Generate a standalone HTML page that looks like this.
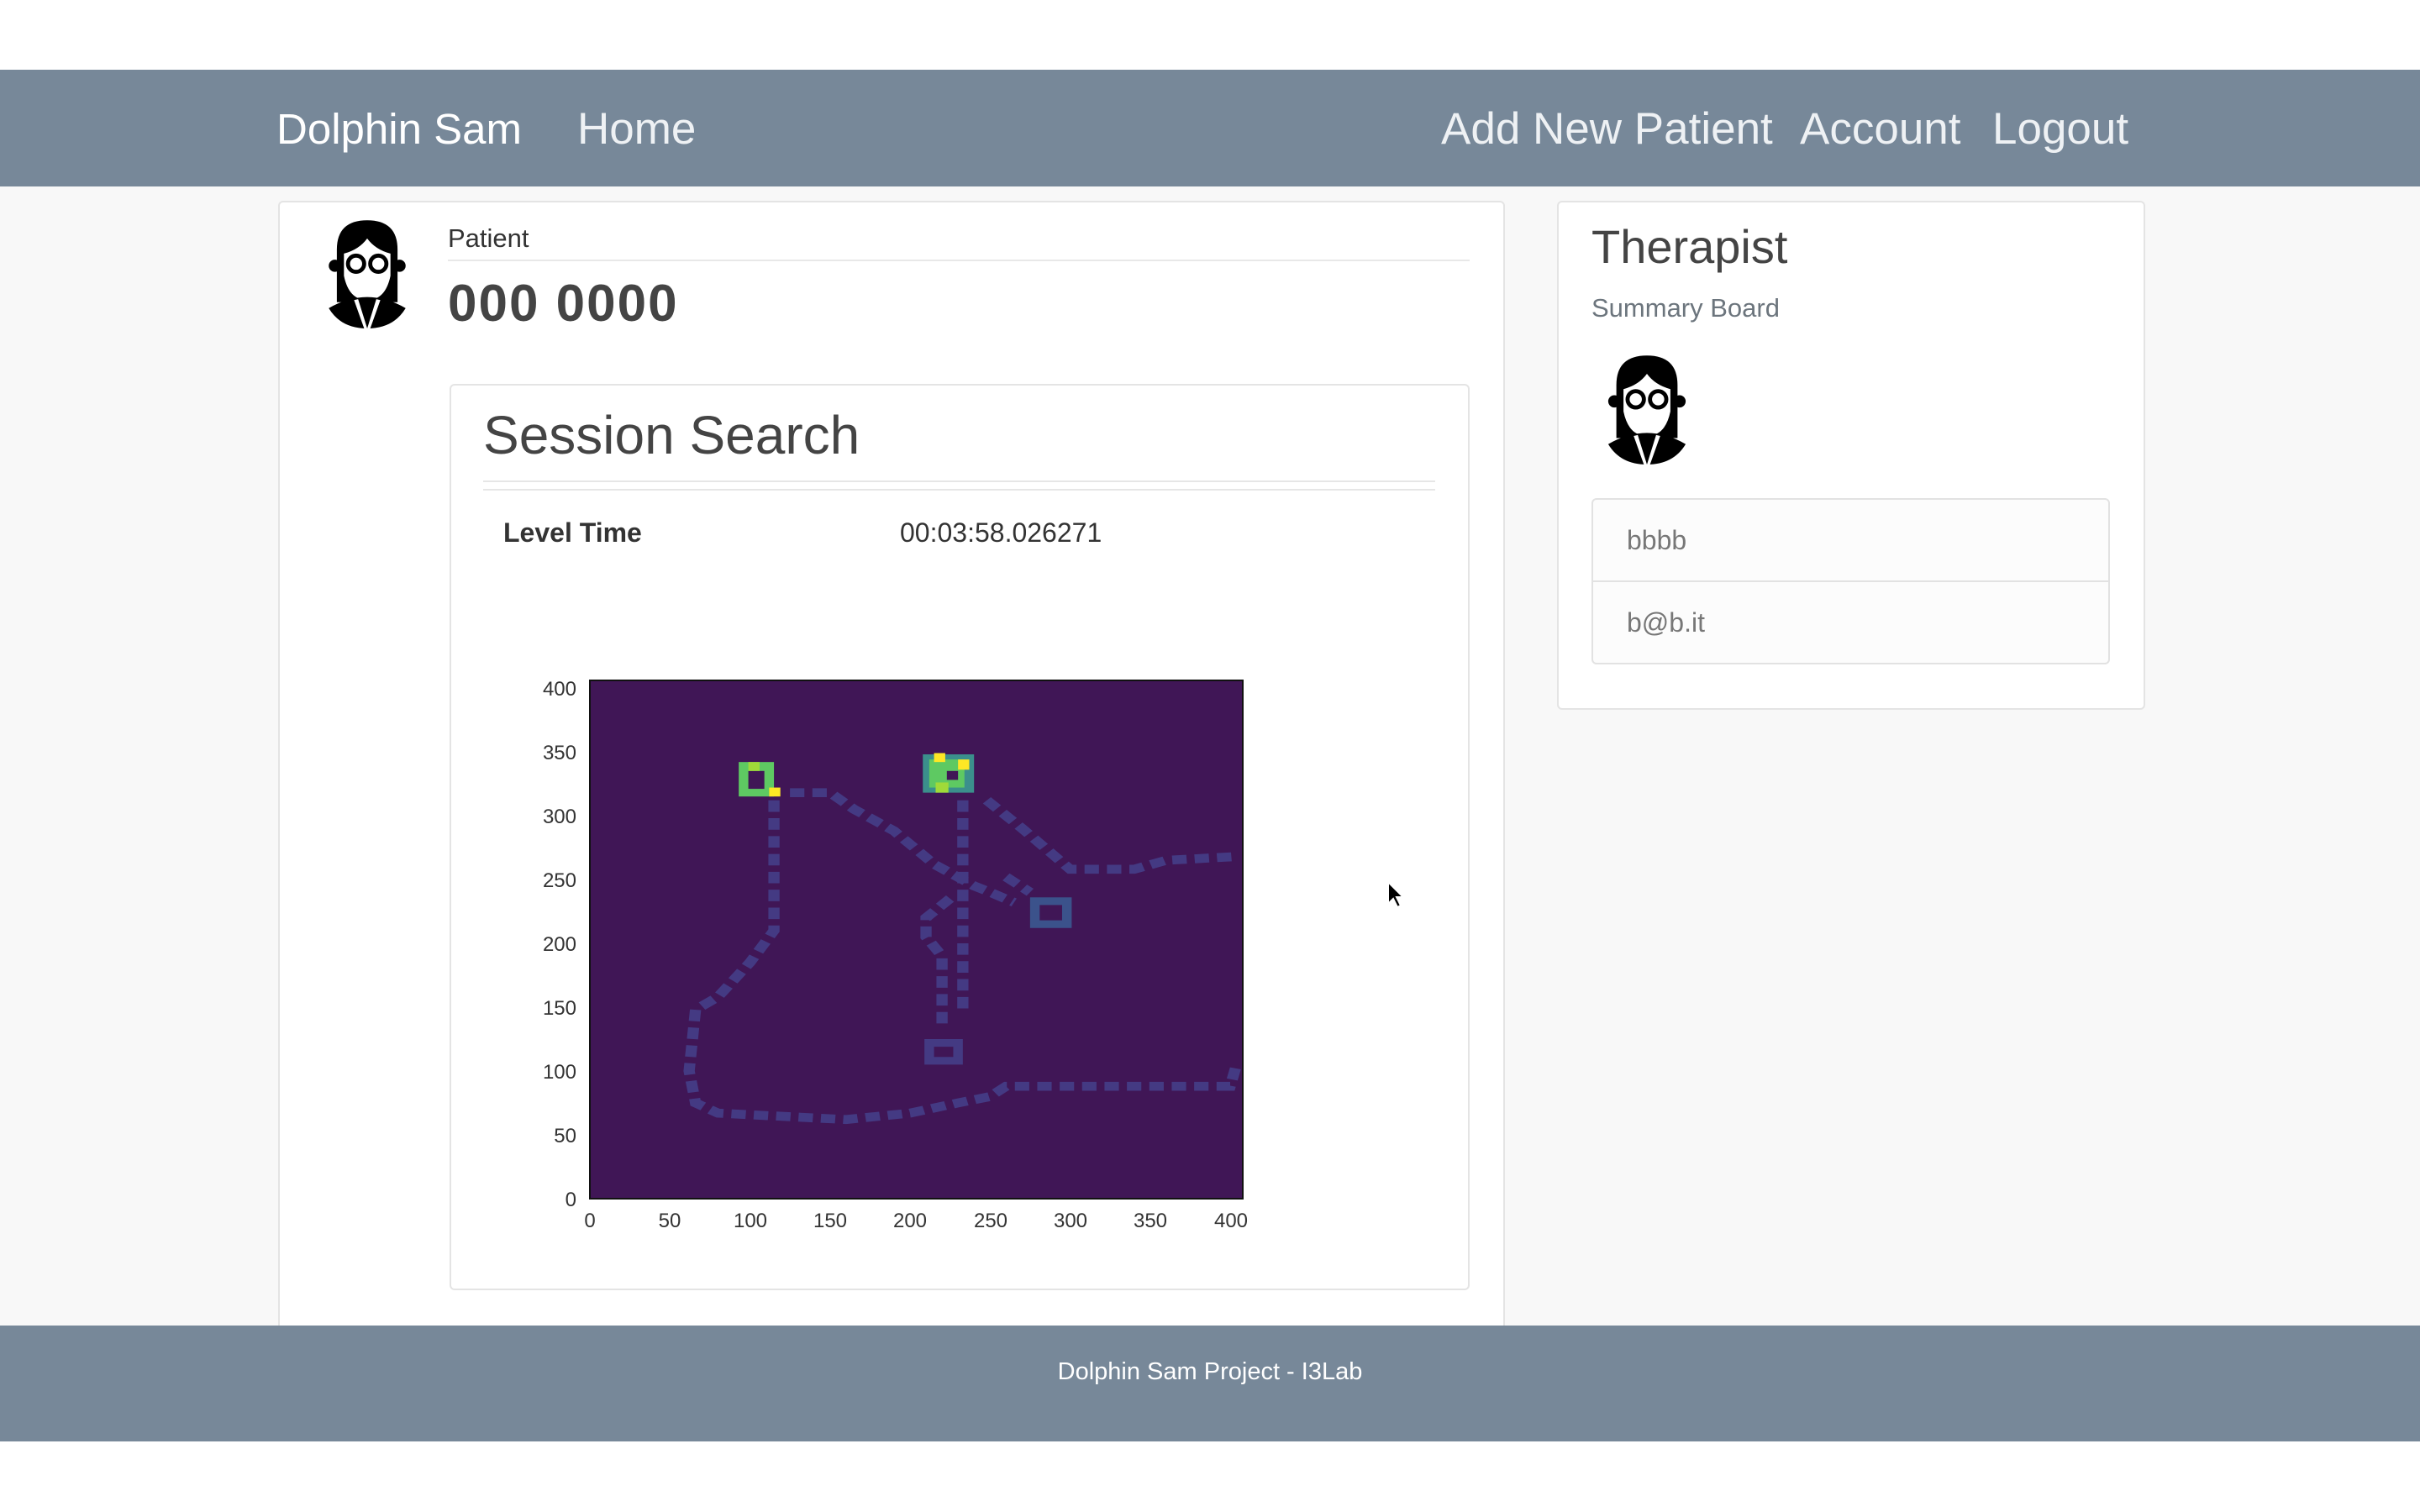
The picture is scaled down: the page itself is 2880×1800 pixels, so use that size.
<!DOCTYPE html>
<html><head><meta charset="utf-8">
<style>
*{box-sizing:border-box;margin:0;padding:0}
body{width:2880px;height:1800px;background:#fff;font-family:"Liberation Sans",sans-serif;position:relative;overflow:hidden}
.abs{position:absolute}
#main{position:absolute;left:0;top:222px;width:2880px;height:1356px;background:#f8f8f8}
nav{position:absolute;left:0;top:83px;width:2880px;height:139px;background:#778899}
nav span{position:absolute;top:40px;font-size:53px;color:#eef1f4;white-space:nowrap}
.card{position:absolute;background:#fff;border:2px solid #e4e4e4;border-radius:6px}
footer{position:absolute;left:0;top:1578px;width:2880px;height:138px;background:#778899;color:#fff;font-size:29px;text-align:center;line-height:110px}
</style></head><body>
<nav>
<span style="left:329px;color:#fff;font-size:51px;top:41px">Dolphin Sam</span>
<span style="left:687px">Home</span>
<span style="left:1715px">Add New Patient</span>
<span style="left:2142px">Account</span>
<span style="left:2371px">Logout</span>
</nav>
<div id="main"></div>
<div class="card" style="left:331px;top:239px;width:1460px;height:1400px"></div>
<svg class="abs" style="left:380px;top:261px" width="114" height="130" viewBox="0 0 80 108">
<path d="M10,82 L10,30 Q10,1 40,1 Q70,1 70,30 L70,82 Z" fill="#000"/>
<circle cx="8" cy="46" r="6" fill="#000"/><circle cx="72" cy="46" r="6" fill="#000"/>
<path d="M17,34 Q32,30 40,19 Q48,30 63,34 L63,56 Q58,80 40,80 Q22,80 17,56 Z" fill="#fff"/>
<circle cx="29" cy="44" r="8" fill="#fff" stroke="#000" stroke-width="4"/>
<circle cx="51" cy="44" r="8" fill="#fff" stroke="#000" stroke-width="4"/>
<path d="M2,88 Q40,66 78,88 Q66,108 40,108 Q14,108 2,88 Z" fill="#000"/>
<polygon points="27,80 37,108 40,108 31,79" fill="#fff"/><polygon points="53,80 43,108 40,108 49,79" fill="#fff"/>
</svg>
<div class="abs" style="left:533px;top:266px;font-size:31px;color:#333">Patient</div>
<div class="abs" style="left:533px;top:309px;width:1216px;height:2px;background:#e8e8e8"></div>
<div class="abs" style="left:533px;top:326px;font-size:62px;color:#444;font-weight:bold;letter-spacing:2px">000 0000</div>
<div class="card" style="left:535px;top:457px;width:1214px;height:1079px"></div>
<div class="abs" style="left:575px;top:481px;font-size:64px;color:#444">Session Search</div>
<div class="abs" style="left:575px;top:572px;width:1133px;height:2px;background:#e6e6e6"></div>
<div class="abs" style="left:575px;top:582px;width:1133px;height:2px;background:#e6e6e6"></div>
<div class="abs" style="left:599px;top:616px;font-size:32px;color:#333;font-weight:bold">Level Time</div>
<div class="abs" style="left:1071px;top:616px;font-size:32px;color:#333">00:03:58.026271</div>
<svg class="abs" style="left:600px;top:780px" width="900" height="700" viewBox="0 0 900 700">
<g font-size="24" fill="#333" font-family="Liberation Sans,sans-serif">
<text x="86" y="48" text-anchor="end">400</text><text x="86" y="124" text-anchor="end">350</text>
<text x="86" y="200" text-anchor="end">300</text><text x="86" y="276" text-anchor="end">250</text>
<text x="86" y="352" text-anchor="end">200</text><text x="86" y="428" text-anchor="end">150</text>
<text x="86" y="504" text-anchor="end">100</text><text x="86" y="580" text-anchor="end">50</text>
<text x="86" y="656" text-anchor="end">0</text>
<text x="102" y="681" text-anchor="middle">0</text><text x="197" y="681" text-anchor="middle">50</text>
<text x="293" y="681" text-anchor="middle">100</text><text x="388" y="681" text-anchor="middle">150</text>
<text x="483" y="681" text-anchor="middle">200</text><text x="579" y="681" text-anchor="middle">250</text>
<text x="674" y="681" text-anchor="middle">300</text><text x="769" y="681" text-anchor="middle">350</text>
<text x="865" y="681" text-anchor="middle">400</text>
</g>
<rect x="102" y="30" width="777" height="617" fill="#401656" stroke="#111" stroke-width="2"/>
<g transform="translate(102,647) scale(1.905,-1.52)" fill="none" stroke="#443a83" stroke-width="7" stroke-dasharray="9,5">
<polyline points="115,312 115,210 100,185 80,158 66,148 62,100 66,75 80,67 160,62 200,67 230,75 250,80 260,88 400,88 404,105"/>
<polyline points="125,318 150,318 165,305 190,288 215,262 240,245 250,240 265,232"/>
<polyline points="233,312 233,145"/>
<polyline points="225,235 210,220 210,205 220,190 220,135"/>
<polyline points="248,312 270,290 300,258 340,258 360,265 405,268"/>
<polyline points="260,252 275,240"/>
<rect x="212" y="108" width="18" height="14" stroke-dasharray="none" stroke-width="6"/>
<rect x="278" y="215" width="20" height="18" stroke-dasharray="none" stroke-width="6" stroke="#3b528b"/>
</g>
<g transform="translate(102,647) scale(1.905,-1.52)">
<rect x="93" y="315" width="22" height="27" fill="#5ec962"/>
<rect x="99" y="321" width="10" height="14" fill="#401656"/>
<rect x="99" y="335" width="7" height="7" fill="#a0da39"/>
<rect x="112" y="315" width="7" height="7" fill="#fde725"/>
<rect x="208" y="318" width="32" height="30" fill="#3b8f8c"/>
<rect x="212" y="322" width="22" height="22" fill="#5ec962"/>
<rect x="223" y="328" width="7" height="7" fill="#401656"/>
<rect x="230" y="336" width="7" height="8" fill="#fde725"/>
<rect x="215" y="342" width="7" height="7" fill="#fde725"/>
<rect x="216" y="318" width="8" height="8" fill="#a0da39"/>
</g>
</svg>
<div class="card" style="left:1853px;top:239px;width:700px;height:606px"></div>
<div class="abs" style="left:1894px;top:261px;font-size:56px;color:#444">Therapist</div>
<div class="abs" style="left:1894px;top:349px;font-size:31px;color:#6c757d">Summary Board</div>
<svg class="abs" style="left:1903px;top:422px" width="114" height="131" viewBox="0 0 80 108">
<path d="M10,82 L10,30 Q10,1 40,1 Q70,1 70,30 L70,82 Z" fill="#000"/>
<circle cx="8" cy="46" r="6" fill="#000"/><circle cx="72" cy="46" r="6" fill="#000"/>
<path d="M17,34 Q32,30 40,19 Q48,30 63,34 L63,56 Q58,80 40,80 Q22,80 17,56 Z" fill="#fff"/>
<circle cx="29" cy="44" r="8" fill="#fff" stroke="#000" stroke-width="4"/>
<circle cx="51" cy="44" r="8" fill="#fff" stroke="#000" stroke-width="4"/>
<path d="M2,88 Q40,66 78,88 Q66,108 40,108 Q14,108 2,88 Z" fill="#000"/>
<polygon points="27,80 37,108 40,108 31,79" fill="#fff"/><polygon points="53,80 43,108 40,108 49,79" fill="#fff"/>
</svg>
<div class="abs" style="left:1894px;top:593px;width:617px;height:198px;border:2px solid #e2e2e2;border-radius:6px;background:#fcfcfc"></div>
<div class="abs" style="left:1894px;top:691px;width:617px;height:2px;background:#e2e2e2"></div>
<div class="abs" style="left:1936px;top:625px;font-size:32px;color:#777">bbbb</div>
<div class="abs" style="left:1936px;top:723px;font-size:32px;color:#777">b@b.it</div>
<svg class="abs" style="left:1650px;top:1048px" width="24" height="36" viewBox="0 0 12 18"><path d="M1,1 L1,14 L4,11 L6.5,16 L8.5,15 L6,10 L10,10 Z" fill="#000" stroke="#fff" stroke-width="1"/></svg>
<footer>Dolphin Sam Project - I3Lab</footer>
</body></html>
